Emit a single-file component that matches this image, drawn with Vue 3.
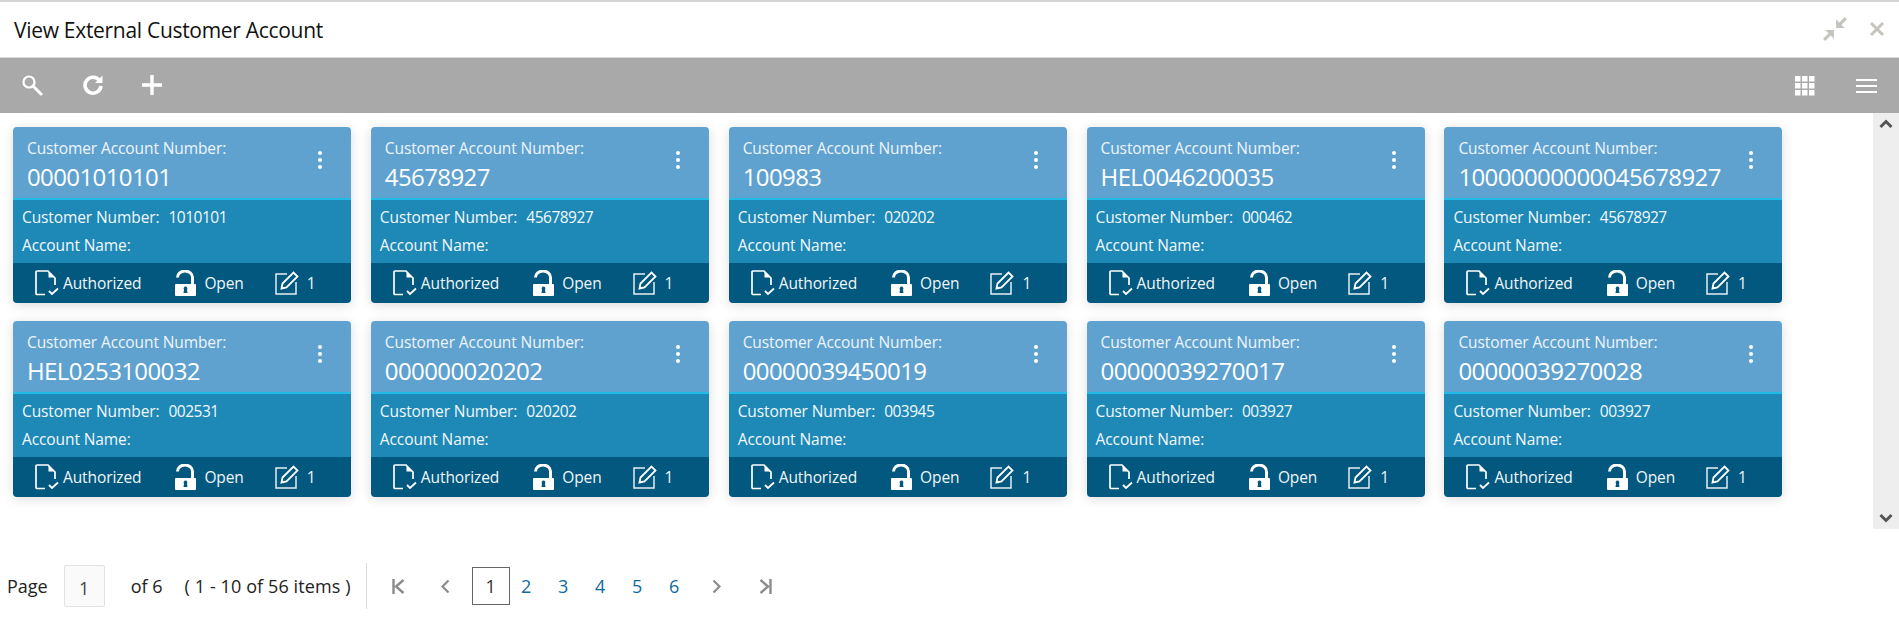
<template>
  <div class="page">
    <!-- title -->
    <div class="title-bar">
      <span class="title">View External Customer Account</span>
      <div class="win-actions">
        <svg class="win-icon" width="26" height="26" viewBox="0 0 24 24">
          <path d="M23 3 L21 1 L16 6 L13 3 L13 11 L21 11 L18 8 Z" fill="#c6c4be" />
          <path d="M1 21 L3 23 L8 18 L11 21 L11 13 L3 13 L6 16 Z" fill="#c6c4be" />
        </svg>
        <svg class="win-icon close" width="16" height="16" viewBox="0 0 16 16">
          <path d="M2 2 L14 14 M14 2 L2 14" stroke="#c6c4be" stroke-width="3" fill="none" />
        </svg>
      </div>
    </div>

    <!-- toolbar -->
    <div class="toolbar">
      <div class="tool-left">
        <svg class="tool search" width="22" height="22" viewBox="0 0 22 22">
          <circle cx="8" cy="8" r="5.500" stroke="#fff" stroke-width="2.200" fill="none" />
          <path d="M12 12 L20 20" stroke="#fff" stroke-width="3" stroke-linecap="round" />
        </svg>
        <svg class="tool refresh" width="22" height="22" viewBox="0 0 22 22">
          <path d="M17.500 6.500 A8 8 0 1 0 19 12" stroke="#fff" stroke-width="3.600" fill="none" />
          <path d="M13 9 L20.500 9 L20.500 1.500 Z" fill="#fff" />
        </svg>
        <svg class="tool plus" width="22" height="22" viewBox="0 0 22 22">
          <path d="M11 1 V21 M1 11 H21" stroke="#fff" stroke-width="3.400" />
        </svg>
      </div>
      <div class="tool-right">
        <svg width="20" height="20" viewBox="0 0 20 20">
          <path d="M0 0h5.500v5.500H0z M7 0h5.500v5.500H7z M14 0h5.500v5.500H14z M0 7h5.500v5.500H0z M7 7h5.500v5.500H7z M14 7h5.500v5.500H14z M0 14h5.500v5.500H0z M7 14h5.500v5.500H7z M14 14h5.500v5.500H14z" fill="#fff" />
        </svg>
        <svg width="22" height="14" viewBox="0 0 22 14">
          <path d="M0 1 H21 M0 7 H21 M0 13 H21" stroke="#fff" stroke-width="1.800" />
        </svg>
      </div>
    </div>

    <!-- cards -->
    <div class="content">
      <div class="card-grid">
        <div v-for="item in accounts" :key="item.account + item.customer" class="card">
          <div class="card-head">
            <div class="head-text">
              <div class="head-label">Customer Account Number:</div>
              <div class="head-value">{{ item.account }}</div>
            </div>
            <div class="kebab"><i></i><i></i><i></i></div>
          </div>
          <div class="card-body">
            <div class="body-row">
              <span>Customer Number:</span><span class="num">{{ item.customer }}</span>
            </div>
            <div class="body-row">Account Name:</div>
          </div>
          <div class="card-foot">
            <span class="foot-item auth">
              <svg width="24" height="26" viewBox="0 0 24 26">
                <path d="M10 24.500 H2 Q1 24.500 1 23.500 V2 Q1 1 2 1 H13 L20 8 V15" stroke="#fff" stroke-width="1.700" fill="none" />
                <path d="M13.500 1.500 L19.500 7.500 H13.500 Z" fill="#fff" />
                <path d="M14 21 L17 24 L23 18.500" stroke="#fff" stroke-width="1.800" fill="none" />
              </svg>
              Authorized
            </span>
            <span class="foot-item open">
              <svg width="23" height="27" viewBox="0 0 23 27">
                <path d="M3.500 7.500 A7.500 6.500 0 0 1 18.500 7.500 V14" stroke="#fff" stroke-width="3" fill="none" />
                <path d="M1 15 Q1 14 2 14 H21 Q22 14 22 15 V25 Q22 26 21 26 H2 Q1 26 1 25 Z" fill="#fff" />
                <path d="M11.500 16.500 A2 2 0 0 1 13 19.700 L13.500 23 H9.500 L10 19.700 A2 2 0 0 1 11.500 16.500 Z" fill="#02587e" />
              </svg>
              Open
            </span>
            <span class="foot-item edit">
              <svg width="24" height="24" viewBox="0 0 24 24">
                <path d="M12 3 H1 V23 H21 V11" stroke="#fff" stroke-width="1.500" fill="none" opacity="0.9" />
                <path d="M6.500 17.500 L7.500 12.500 L18.500 1.500 L22.500 5.500 L11.500 16.500 Z" stroke="#fff" stroke-width="1.800" fill="none" />
              </svg>
              1
            </span>
          </div>
        </div>
      </div>
      <div class="scrollbar">
        <svg width="14" height="10" viewBox="0 0 14 10">
          <path d="M1.500 8 L7 2.500 L12.500 8" stroke="#555" stroke-width="3" fill="none" />
        </svg>
        <svg width="14" height="10" viewBox="0 0 14 10">
          <path d="M1.500 2 L7 7.500 L12.500 2" stroke="#555" stroke-width="3" fill="none" />
        </svg>
      </div>
    </div>

    <!-- pagination -->
    <div class="pager">
      <span class="pg-label">Page</span>
      <div class="pg-input">1</div>
      <span class="pg-of">of 6</span>
      <span class="pg-range">( 1 - 10 of 56 items )</span>
      <div class="pg-nav">
        <svg class="nav first" width="13" height="15" viewBox="0 0 13 15">
          <path d="M1.500 0 V15 M11.500 1 L4 7.500 L11.500 14" stroke="#8c8c8c" stroke-width="2.400" fill="none" />
        </svg>
        <svg class="nav prev" width="10" height="15" viewBox="0 0 10 15">
          <path d="M8.500 1.500 L2.500 7.500 L8.500 13.500" stroke="#8c8c8c" stroke-width="2.200" fill="none" />
        </svg>
        <div class="pages">
          <span v-for="p in pages" :key="p" class="pg-num" :class="{ current: p === 1 }">{{ p }}</span>
        </div>
        <svg class="nav next" width="10" height="15" viewBox="0 0 10 15">
          <path d="M1.500 1.500 L7.500 7.500 L1.500 13.500" stroke="#8c8c8c" stroke-width="2.200" fill="none" />
        </svg>
        <svg class="nav last" width="13" height="15" viewBox="0 0 13 15">
          <path d="M11.500 0 V15 M1.500 1 L9 7.500 L1.500 14" stroke="#8c8c8c" stroke-width="2.400" fill="none" />
        </svg>
      </div>
    </div>
  </div>
</template>

<script setup>
const accounts = [
  { account: '00001010101', customer: '1010101' },
  { account: '45678927', customer: '45678927' },
  { account: '100983', customer: '020202' },
  { account: 'HEL0046200035', customer: '000462' },
  { account: '10000000000045678927', customer: '45678927' },
  { account: 'HEL0253100032', customer: '002531' },
  { account: '000000020202', customer: '020202' },
  { account: '00000039450019', customer: '003945' },
  { account: '00000039270017', customer: '003927' },
  { account: '00000039270028', customer: '003927' }
]

const pages = [1, 2, 3, 4, 5, 6]
</script>

<style>
html,
body {
  margin: 0;
  background: #fff;
}
</style>

<style scoped>
.page {
  width: 1899px;
  height: 641px;
  overflow: hidden;
  display: flex;
  flex-direction: column;
  font-family: "Open Sans", "Noto Sans", sans-serif;
  background: #fff;
  border-top: 2px solid #d4d4d4;
  box-sizing: border-box;
}

.title-bar {
  height: 54px;
  flex: none;
  display: flex;
  align-items: center;
  justify-content: space-between;
  padding: 1px 14px 0;
  border-bottom: 1px solid #d6d6d6;
}

.title {
  font-size: 21px;
  letter-spacing: -0.3px;
  color: #111;
}

.win-actions {
  display: flex;
  align-items: center;
  gap: 21px;
  margin-top: -2px;
}

.toolbar {
  height: 55px;
  flex: none;
  background: #a9a9a9;
  display: flex;
  align-items: center;
  justify-content: space-between;
  padding: 0 21px;
}

.tool-left {
  display: flex;
  align-items: center;
  margin-top: -2px;
}

.tool-left .refresh {
  margin-left: 39px;
}

.tool-left .plus {
  margin-left: 37px;
}

.tool-right {
  display: flex;
  align-items: center;
  gap: 41px;
}

.content {
  height: 416px;
  flex: none;
  display: flex;
  justify-content: space-between;
}

.card-grid {
  display: grid;
  grid-template-columns: repeat(5, 338px);
  grid-auto-rows: 176px;
  column-gap: 19.850px;
  row-gap: 18px;
  padding: 14px 0 0 13px;
}

.card {
  display: flex;
  flex-direction: column;
  border-radius: 4px;
  overflow: hidden;
  color: #fff;
  box-shadow: 0 2px 12px rgba(0, 0, 0, 0.14);
}

.card-head {
  height: 71px;
  background: #5fa2d0;
  display: flex;
  justify-content: space-between;
  padding: 0 29px 0 14px;
  box-sizing: border-box;
}

.head-label {
  font-size: 15.500px;
  letter-spacing: -0.1px;
  line-height: 20px;
  margin-top: 11px;
  color: #eef5fa;
}

.head-value {
  font-size: 24px;
  letter-spacing: -0.6px;
  line-height: 32px;
  margin-top: 3px;
}

.kebab {
  display: flex;
  flex-direction: column;
  gap: 3px;
  padding-top: 24px;
}

.kebab i {
  width: 4px;
  height: 4px;
  background: #fff;
  border-radius: 50%;
}

.card-body {
  height: 65px;
  box-sizing: border-box;
  background: #1e88b7;
  border-top: 2px solid #21bbe8;
  padding: 3px 0 0 9px;
}

.body-row {
  font-size: 15.500px;
  letter-spacing: -0.1px;
  line-height: 28px;
  color: #f2f8fb;
}

.body-row .num {
  margin-left: 9px;
  letter-spacing: -0.5px;
}

.card-foot {
  height: 40px;
  background: #02587e;
  display: flex;
  align-items: center;
  padding-left: 22px;
}

.foot-item {
  display: flex;
  align-items: center;
  gap: 4px;
  font-size: 15.500px;
  letter-spacing: -0.1px;
  color: #f0f6f9;
}

.foot-item.open {
  margin-left: 33px;
  gap: 7px;
}

.foot-item.edit {
  margin-left: 31px;
  gap: 8px;
}

.scrollbar {
  width: 26px;
  background: #eee;
  display: flex;
  flex-direction: column;
  justify-content: space-between;
  align-items: center;
  padding: 6px 0 6px;
  box-sizing: border-box;
}

.pager {
  flex: 1;
  display: flex;
  align-items: center;
  padding: 2px 0 0 7px;
  font-size: 18px;
  color: #222;
}

.pg-input {
  width: 41px;
  height: 42px;
  box-sizing: border-box;
  margin-left: 16px;
  background: #fafafa;
  border: 1px solid #e2e2e2;
  border-radius: 2px;
  display: flex;
  align-items: center;
  justify-content: center;
  padding-top: 4px;
  color: #444;
}

.pg-of {
  margin-left: 26px;
}

.pg-range {
  margin-left: 22px;
  letter-spacing: 0.1px;
}

.pg-nav {
  margin-left: 15px;
  height: 46px;
  border-left: 1px solid #ddd;
  display: flex;
  align-items: center;
  padding-left: 25px;
}

.nav.prev {
  margin-left: 35px;
}

.pages {
  display: flex;
  align-items: center;
  margin-left: 22px;
}

.pg-num {
  width: 37px;
  height: 38px;
  box-sizing: border-box;
  text-align: center;
  line-height: 38px;
  color: #0f6aa0;
}

.pg-num.current {
  width: 38px;
  margin-right: -2px;
  border: 1px solid #666;
  line-height: 36px;
  color: #333;
}

.nav.next {
  margin-left: 19px;
}

.nav.last {
  margin-left: 37px;
}
</style>
